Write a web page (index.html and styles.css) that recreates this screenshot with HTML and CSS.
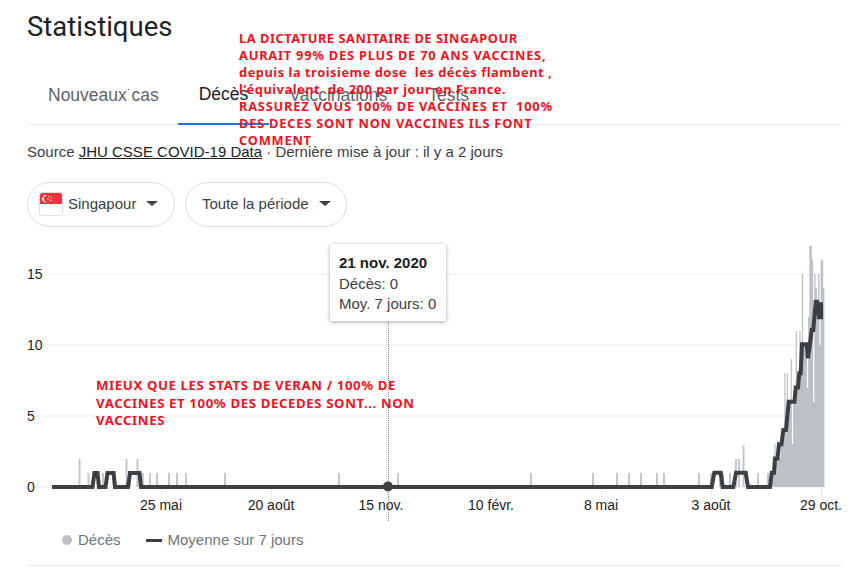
FILE: index.html
```html
<!DOCTYPE html>
<html lang="fr">
<head>
<meta charset="utf-8">
<title>Statistiques</title>
<link rel="stylesheet" href="styles.css">
</head>
<body>
<main class="page">
  <h1 class="title">Statistiques</h1>
  <nav class="tabs">
    <a class="tab">Nouveaux<span class="mark">˙</span>cas</a>
    <a class="tab tab-active">Décès</a>
    <a class="tab">Vaccinations</a>
    <a class="tab">Tests</a>
  </nav>
  <p class="source">Source <a class="source-link">JHU CSSE COVID-19 Data</a> · Dernière mise à jour : il y a 2 jours</p>
  <div class="chips">
    <button class="chip chip-flag">
      <svg class="flag" width="24" height="24" viewBox="0 0 24 24">
        <rect x="0.5" y="0.5" width="23" height="23" rx="2.5" fill="#fff" stroke="#e0e0e0"/>
        <path d="M1 12V3a2 2 0 0 1 2-2h18a2 2 0 0 1 2 2v9z" fill="#ef3340"/>
        <path d="M8.5 3.6a3.2 3.2 0 1 0 0 6.3a3.6 3.6 0 1 1 0-6.3z" fill="#fff"/>
        <circle cx="10" cy="4.6" r=".7" fill="#fff"/><circle cx="12.4" cy="5.8" r=".7" fill="#fff"/><circle cx="9" cy="7" r=".7" fill="#fff"/><circle cx="11.6" cy="8.2" r=".7" fill="#fff"/>
      </svg>
      <span>Singapour</span><i class="caret"></i>
    </button>
    <button class="chip"><span>Toute la période</span><i class="caret"></i></button>
  </div>
  <div class="chart">
    <svg class="plot" width="815" height="295" viewBox="27 235 815 295">
      <g class="grid">
        <path d="M43 274H825M43 345H825M35 416H825M35 487H825"/>
      </g>
      <g class="ticks">
        <path d="M161.500 488V497M271.500 488V497M381.500 488V497M490.500 488V497M601.500 488V497M711.500 488V497M821.500 488V497"/>
      </g>
      <g class="ylabels">
        <text x="27" y="279">15</text>
        <text x="27" y="350">10</text>
        <text x="27" y="421">5</text>
        <text x="27" y="492">0</text>
      </g>
      <g class="xlabels">
        <text x="161" y="510">25 mai</text>
        <text x="271" y="510">20 août</text>
        <text x="381" y="510">15 nov.</text>
        <text x="491" y="510">10 févr.</text>
        <text x="601" y="510">8 mai</text>
        <text x="711" y="510">3 août</text>
        <text x="821" y="510">29 oct.</text>
      </g>
      <path class="bars" d="M79.500 487V459M88.500 487V473M93 487V473M103 487V473M115 487V473M126.500 487V459M130 487V473M137.500 487V459M143 487V473M150 487V473M157 487V473M169 487V473M177 487V473M186 487V473M225 487V473M339 487V473M398 487V473M531 487V473M593 487V473M617 487V473M629 487V473M641 487V473M657 487V473M664 487V473M699 487V473M711 487V473M720 487V473M723 487V473M730 487V473M736 487V459M739 487V459M743.500 487V445M747 487V473M758 487V473M768 487V473"/>
      <path class="ramp" d="M772.500 487V473M773.750 487V473M775 487V444M776.250 487V459M777.500 487V459M778.750 487V444M780 487V459M781.250 487V444M782.500 487V444M783.750 487V430M785 487V373M786.250 487V416M787.500 487V373M788.750 487V402M790 487V402M791.250 487V359M792.500 487V444M793.750 487V402M795 487V388M796.250 487V331M797.500 487V373M798.750 487V388M800 487V331M801.250 487V359M802.500 487V274M803.750 487V345M805 487V345M806.250 487V345M807.500 487V388M808.750 487V317M810 487V246M811.250 487V246M812.500 487V260M813.750 487V402M815 487V274M816.250 487V288M817.500 487V317M818.750 487V274M820 487V345M821.250 487V260M822.500 487V260M823.750 487V288"/>
      <path class="avg" d="M52 487H92.500L94.500 473H97.500L99 487H105.500L107.500 473H113.500L115 487H128L130 473H139.500L141 487H711.700L714.300 472.700H720.700L722.700 487H733.300L736 472.700H745.700L748 487H770L771.700 472.700H774L775 458.500H777.500L779 444.300H781.500L783.300 430H786L788.700 401.700H794.500L795.700 387.500H798L799.300 373.300H800.700L802 344.300H806.700L808 358.300L810 344.300L811.700 330H813.300L815.700 301.700H817.300L819 317.300H821V302.300"/>
      <path class="cursor" d="M388.500 322V522"/>
      <circle class="point" cx="388" cy="486.500" r="5"/>
    </svg>
    <div class="tooltip">
      <strong class="tooltip-title">21 nov. 2020</strong>
      <span>Décès: 0</span>
      <span>Moy. 7 jours: 0</span>
    </div>
  </div>
  <div class="legend">
    <span class="legend-item"><i class="dot"></i>Décès</span>
    <span class="legend-item"><i class="dash"></i>Moyenne sur 7 jours</span>
  </div>
  <div class="note note-top">
    <span class="line">LA DICTATURE SANITAIRE DE SINGAPOUR</span>
    <span class="line line-wide">AURAIT 99% DES PLUS DE 70 ANS VACCINES,</span>
    <span class="line">depuis la troisieme dose  les décès flambent ,</span>
    <span class="line">l'équivalent  de 200 par jour en France.</span>
    <span class="line line-wide">RASSUREZ VOUS 100% DE VACCINES ET  100%</span>
    <span class="line line-wide">DES DECES SONT NON VACCINES ILS FONT</span>
    <span class="line line-wide">COMMENT</span>
  </div>
  <div class="note note-chart">
    <span class="line">MIEUX QUE LES STATS DE VERAN / 100% DE</span>
    <span class="line">VACCINES ET 100% DES DECEDES SONT... NON</span>
    <span class="line">VACCINES</span>
  </div>
</main>
</body>
</html>
```
FILE: styles.css
```css
* { box-sizing: border-box; }
html, body { margin: 0; padding: 0; background: #fff; }
body { font-family: "Liberation Sans", Arial, sans-serif; color: #202124; overflow: hidden; }
.page { position: relative; width: 842px; height: 577px; padding-left: 27px; }
.title { margin: 0; padding-top: 9px; height: 62px; font-family: Roboto, sans-serif; font-size: 27.500px; line-height: 36px; font-weight: 400; }
.tabs { display: flex; height: 63px; border-bottom: 1px solid #e8eaed; }
.tab { display: flex; align-items: center; height: 63px; padding: 3px 20.500px 0; font-size: 17.500px; color: #5f6368; }
.tab-active { color: #202124; border-bottom: 2px solid #1a73e8; padding-bottom: 2px; padding-top: 5px; margin-bottom: -1px; }
.tab:first-child { padding-left: 21px; padding-right: 19.500px; }
.mark { font-size: 14px; color: #5f6368; }
.source { margin: 0; padding-top: 18px; height: 57px; font-size: 15px; line-height: 18px; color: #3c4043; }
.source-link { color: #202124; text-decoration: underline; }
.chips { display: flex; gap: 10px; height: 45px; }
.chip { display: flex; align-items: center; height: 45px; padding: 0 15.500px 2px; font: inherit; font-size: 15px; color: #3c4043; background: #fff; border: 1px solid #dadce0; border-radius: 23px; }
.chip-flag { padding-left: 11px; padding-right: 16px; }
.flag { margin-right: 5px; }
.caret { width: 0; height: 0; margin-left: 10px; border-left: 6px solid transparent; border-right: 6px solid transparent; border-top: 5.500px solid #3c4043; }
.chart { position: relative; margin-top: 8px; height: 295px; }
.plot { display: block; }
.grid path { fill: none; stroke: #f1f3f4; stroke-width: 1.500; }
.ticks path { fill: none; stroke: #e8eaed; stroke-width: 1; }
.ylabels text, .xlabels text { font-size: 14px; fill: #202124; }
.xlabels text { text-anchor: middle; }
.bars { fill: none; stroke: #c4c7cb; stroke-width: 2; }
.ramp { fill: none; stroke: #bdc1c6; stroke-width: 1.300; }
.avg { fill: none; stroke: #3c4043; stroke-width: 4; stroke-linejoin: miter; }
.cursor { fill: none; stroke: #80868b; stroke-width: 1; stroke-dasharray: 1 1; }
.point { fill: #3c4043; }
.tooltip { position: absolute; left: 303px; top: 9px; width: 116px; height: 77px; padding: 9px 9px; display: flex; flex-direction: column; background: #fff; border-radius: 2px; box-shadow: 0 1px 4px rgba(0,0,0,.35); font-size: 15px; line-height: 20.500px; color: #3c4043; white-space: nowrap; }
.tooltip-title { font-weight: 700; color: #202124; }
.legend { display: flex; gap: 25px; height: 36px; padding-left: 35px; border-bottom: 1px solid #e8eaed; font-size: 15px; line-height: 20px; color: #70757a; align-items: flex-start; }
.legend-item { display: flex; align-items: center; height: 20px; }
.dot { width: 10px; height: 10px; margin-right: 6px; border-radius: 50%; background: #bdc1c6; }
.dash { width: 16px; height: 3px; margin-right: 6px; background: #3c4043; }
.note { position: absolute; display: flex; flex-direction: column; margin: 0; font-family: "Noto Sans", sans-serif; font-weight: 700; color: #f5101e; white-space: pre; }
.note-top { left: 239px; top: 29.500px; font-size: 12.800px; letter-spacing: .55px; line-height: 17.100px; }
.line-wide { letter-spacing: .8px; }
.note-chart { left: 96px; top: 377px; font-size: 13.200px; letter-spacing: .62px; line-height: 17.500px; }
```
